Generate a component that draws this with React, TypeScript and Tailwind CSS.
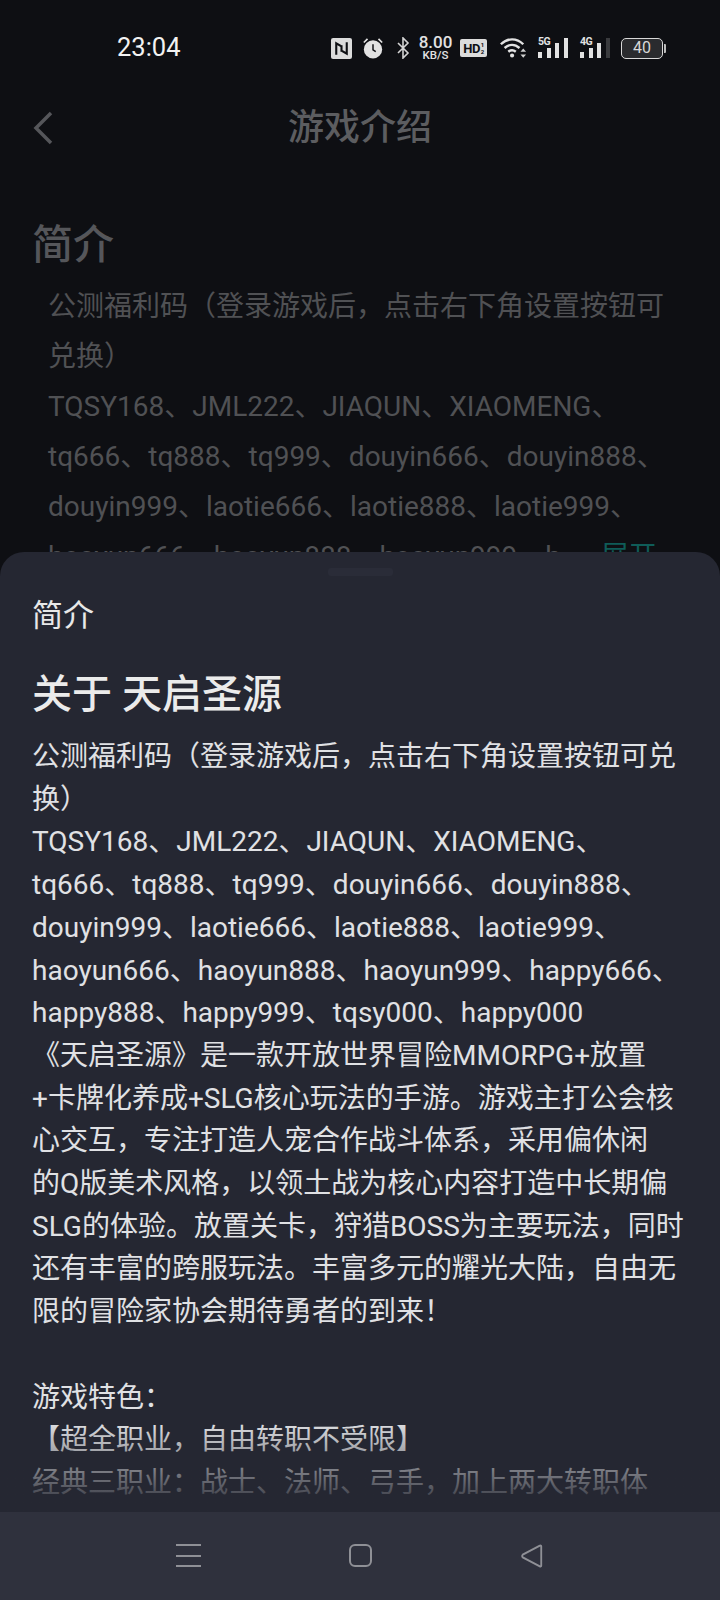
const font = "[font-family:Roboto,'Noto_Sans_CJK_SC',sans-serif]";

const sheetLines = [
  '公测福利码（登录游戏后，点击右下角设置按钮可兑',
  '换）',
  'TQSY168、JML222、JIAQUN、XIAOMENG、',
  'tq666、tq888、tq999、douyin666、douyin888、',
  'douyin999、laotie666、laotie888、laotie999、',
  'haoyun666、haoyun888、haoyun999、happy666、',
  'happy888、happy999、tqsy000、happy000',
  '《天启圣源》是一款开放世界冒险MMORPG+放置',
  '+卡牌化养成+SLG核心玩法的手游。游戏主打公会核',
  '心交互，专注打造人宠合作战斗体系，采用偏休闲',
  '的Q版美术风格，以领土战为核心内容打造中长期偏',
  'SLG的体验。放置关卡，狩猎BOSS为主要玩法，同时',
  '还有丰富的跨服玩法。丰富多元的耀光大陆，自由无',
  '限的冒险家协会期待勇者的到来！',
  '\u00a0',
  '游戏特色：',
  '【超全职业，自由转职不受限】',
  '经典三职业：战士、法师、弓手，加上两大转职体',
];

const pageLines = [
  '公测福利码（登录游戏后，点击右下角设置按钮可',
  '兑换）',
  'TQSY168、JML222、JIAQUN、XIAOMENG、',
  'tq666、tq888、tq999、douyin666、douyin888、',
  'douyin999、laotie666、laotie888、laotie999、',
];

function Signal({ label, last, className }: { label: string; last: string; className: string }) {
  return (
    <div className={`relative flex h-[20px] w-[30px] items-end gap-[4.500px] ${className}`}>
      <span className="absolute left-0 top-[-1px] text-[10.5px] font-bold leading-[10px] tracking-[-0.5px]">{label}</span>
      <div className="h-[6px] w-[4px] bg-[#e2e2e2]" />
      <div className="h-[10px] w-[4px] bg-[#e2e2e2]" />
      <div className="h-[15px] w-[4px] bg-[#e2e2e2]" />
      <div className="h-[20px] w-[4px]" style={{ backgroundColor: last }} />
    </div>
  );
}

function StatusIcons() {
  return (
    <div className="flex items-center text-[#e2e2e2]">
      <svg width="21" height="21" viewBox="0 0 20 20">
        <rect width="20" height="20" rx="2" fill="#dcdcdc" />
        <path d="M5 16V5l5 3v5M15 4v11l-5-3V7" fill="none" stroke="#0e0f13" strokeWidth="2" />
      </svg>
      <svg width="22" height="24" viewBox="0 0 24 24" className="ml-[10px]">
        <circle cx="12" cy="13.500" r="10" fill="#e2e2e2" />
        <path d="M12 8v6l3 2" fill="none" stroke="#0e0f13" strokeWidth="1.6" />
        <path d="M2 6l4-4M22 6l-4-4" stroke="#e2e2e2" strokeWidth="1.8" />
      </svg>
      <svg width="14" height="22" viewBox="0 0 14 22" className="ml-[12px]">
        <path d="M2 6l10 10-5 5V1l5 5L2 16" fill="none" stroke="#d4d4d4" strokeWidth="1.6" />
      </svg>
      <div className="ml-[8px] flex w-[35px] flex-col items-center font-medium">
        <span className="text-[17px] leading-[15px]">8.00</span>
        <span className="text-[11.5px] leading-[11px]">KB/S</span>
      </div>
      <div className="ml-[7px] flex h-[18px] w-[27px] items-center justify-center rounded-[2px] bg-[#dcdcdc] text-[13px] font-bold leading-none tracking-[-0.5px] text-[#0e0f13]">
        HD<span className="ml-[1px] text-[6px] leading-[7px]">1<br />2</span>
      </div>
      <svg width="28" height="24" viewBox="0 0 30 24" className="ml-[12px]">
        <path d="M2 8C9 1 19 1 26 8M6 12c5-4.500 11-4.500 16 0M10 16c2.500-2 5.500-2 8 0" fill="none" stroke="#e2e2e2" strokeWidth="2.600" />
        <circle cx="14" cy="20" r="2.200" fill="#e2e2e2" />
        <path d="M23 16h6l-3-3.500zM23 19h6l-3 3.500z" fill="#d0d0d0" />
      </svg>
      <Signal label="5G" last="#e2e2e2" className="ml-[11px]" />
      <Signal label="4G" last="#3a3b3e" className="ml-[12px]" />
      <div className="ml-[11px] flex items-center">
        <div className="flex h-[21px] w-[42px] items-center justify-center rounded-[5px] border border-[#d8d8d8] bg-[#2a2b2e] text-[16px] leading-none text-[#d8d8d8]">
          40
        </div>
        <div className="ml-[1px] h-[9px] w-[2px] rounded-r-[1px] bg-[#bcbcbc]" />
      </div>
    </div>
  );
}

export default function App() {
  return (
    <div className={`relative h-[1600px] w-[720px] overflow-hidden bg-[#0e0f13] ${font}`}>
      <div className="flex h-[94px] items-center pl-[117px] pt-[2px]">
        <span className="w-[214px] text-[25.500px] leading-none text-[#f2f2f2]">23:04</span>
        <StatusIcons />
      </div>

      <div className="relative flex h-[68px] items-center justify-center">
        <svg width="24" height="36" viewBox="0 0 24 36" className="absolute left-[31px] top-[16px]">
          <path d="M20 3L5 18l15 15" fill="none" stroke="#55565a" strokeWidth="3.500" />
        </svg>
        <span className="text-[36px] font-medium leading-none text-[#5c5d60]">游戏介绍</span>
      </div>

      <h2 className="ml-[32px] mt-[56px] text-[41px] font-medium leading-[54px] text-[#55565a]">简介</h2>
      <div className="mt-[10px] pl-[48px] text-[28px] leading-[50px] text-[#505154]">
        {pageLines.map((line) => (
          <div key={line} className="whitespace-nowrap">{line}</div>
        ))}
        <div className="flex whitespace-nowrap">
          <span>haoyun666、haoyun888、haoyun999、h</span>
          <span className="ml-[40px] text-[#0f5c58]">展开</span>
        </div>
      </div>

      {/* bottom sheet */}
      <div className="absolute inset-x-0 bottom-0 top-[552px] flex flex-col overflow-hidden rounded-t-[24px] bg-[#252732]">
        <div className="mx-auto mt-[16px] h-[8px] w-[65px] rounded-[3px] bg-[#2a2c38]" />
        <div className="mt-[18px] pl-[32px] text-[31px] leading-[44px] text-[#e8e8e8]">简介</div>
        <div className="mt-[29px] pl-[32px] text-[40px] font-medium leading-[56px] text-[#ebebeb]">关于 天启圣源</div>
        <div className="relative mt-[13px] h-[777px] overflow-hidden pl-[32px] text-[28px] leading-[42.700px] text-[#e0e1e4]">
          {sheetLines.map((line, i) => (
            <div key={i} className="whitespace-nowrap">{line}</div>
          ))}
          <div className="absolute inset-x-0 bottom-0 h-[90px] bg-gradient-to-b from-[#25273200] to-[#252732]" />
        </div>
        <div className="mt-auto flex h-[88px] bg-[#2f313d] pl-[176px] pt-[32px]">
          <div className="flex h-[23px] w-[25px] flex-col justify-between">
            <div className="h-[2px] bg-[#8f9096]" />
            <div className="h-[2px] bg-[#8f9096]" />
            <div className="h-[2px] bg-[#8f9096]" />
          </div>
          <div className="ml-[148px] h-[23px] w-[23px] rounded-[6px] border-2 border-[#8f9096]" />
          <svg width="24" height="24" viewBox="0 0 26 26" className="ml-[148px]">
            <path d="M23 2.500v21a1 1 0 0 1-1.500.8L3 14.500a2 2 0 0 1 0-3L21.500 1.700a1 1 0 0 1 1.500.8z" fill="none" stroke="#8f9096" strokeWidth="2" />
          </svg>
        </div>
      </div>
    </div>
  );
}
